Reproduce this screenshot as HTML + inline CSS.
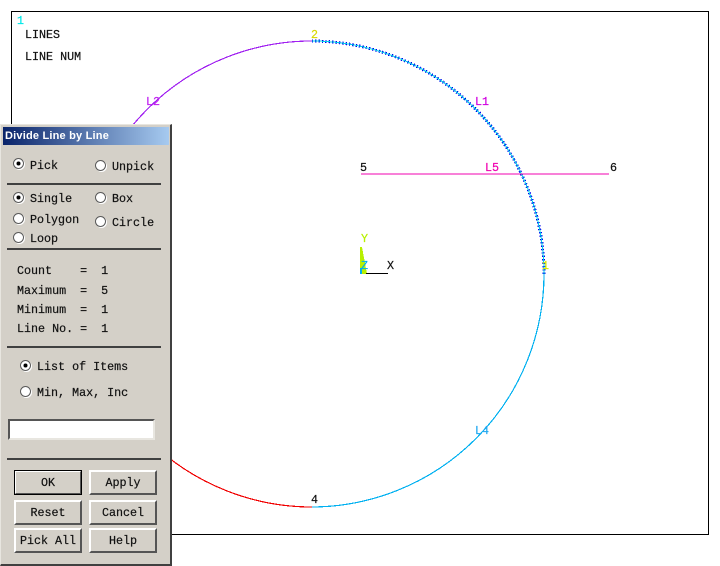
<!DOCTYPE html>
<html>
<head>
<meta charset="utf-8">
<style>
html,body{margin:0;padding:0;width:720px;height:566px;overflow:hidden;background:#fff}
.t{position:absolute;margin-top:1px;font-family:"Liberation Mono",monospace;font-size:11.7px;line-height:14px;color:#111;white-space:pre;-webkit-text-stroke:.2px currentColor}
#panel{position:absolute;left:0;top:124px;width:172px;height:442px;background:#d4d0c8;box-sizing:border-box;border-top:1px solid #e8e6e0;border-left:1px solid #e8e6e0;border-right:2px solid #404040;border-bottom:2px solid #404040}
#title{position:absolute;left:3px;top:127px;width:166px;height:18px;background:linear-gradient(90deg,#0a246a,#a6caf0);color:#fff;font:bold 11px/18px "Liberation Sans",sans-serif;letter-spacing:.2px;padding-left:2px;box-sizing:border-box;white-space:pre}
.sep{position:absolute;left:7px;width:154px;height:2px;background:#404040}
.r{position:absolute;width:11px;height:11px;box-sizing:border-box;border-radius:50%;background:#fff;border:1.5px solid #5a5a5a;box-shadow:1px 1px 0 #fff}
.r.on::after{content:"";position:absolute;left:2.5px;top:2.5px;width:3px;height:3px;border-radius:50%;background:#000;box-shadow:0 0 0 .5px #000}
.b{position:absolute;width:68px;height:25px;box-sizing:border-box;background:#d4d0c8;border:2px solid;border-color:#fff #555 #555 #fff;font-family:"Liberation Mono",monospace;font-size:11.7px;line-height:23px;text-align:center;color:#111;white-space:pre;-webkit-text-stroke:.2px currentColor}
.b.d{outline:1px solid #000;outline-offset:-1px}
#inp{position:absolute;left:8px;top:419px;width:147px;height:21px;box-sizing:border-box;background:#fff;border:2px solid;border-color:#555 #e8e6e0 #e8e6e0 #555}
</style>
</head>
<body>
<svg width="720" height="566" style="position:absolute;left:0;top:0" shape-rendering="crispEdges">
<rect x="11.5" y="11.5" width="697" height="523" fill="#fff" stroke="#000" stroke-width="1"/>
<path d="M312 41A233 233 0 0 0 79 274" fill="none" stroke="#a020f0" stroke-width="1.2"/>
<path d="M79 274A233 233 0 0 0 312 507" fill="none" stroke="#f00000" stroke-width="1.2"/>
<path d="M312 507A233 233 0 0 0 544 274" fill="none" stroke="#00b0f0" stroke-width="1.2"/>
<path d="M544 274A233 233 0 0 0 312 41" fill="none" stroke="#0000f0" stroke-width="3" stroke-dasharray="1.4 2"/>
<path d="M544 274A233 233 0 0 0 312 41" fill="none" stroke="#00d0e8" stroke-width="1"/>
<path d="M361 174H609" stroke="#f000b0" stroke-width="1.2" fill="none"/>
<polygon points="360,247 362,247 367,274 360,274" fill="#b8f000"/>
<rect x="360" y="268" width="2" height="6" fill="#00b0f0"/>
<rect x="366" y="273" width="22" height="1" fill="#000"/>
</svg>
<div class="t" style="left:17px;top:13px;color:#00e8e8">1</div>
<div class="t" style="left:25px;top:27px">LINES</div>
<div class="t" style="left:25px;top:49px">LINE NUM</div>
<div class="t" style="left:146px;top:94px;color:#c020f0">L2</div>
<div class="t" style="left:311px;top:27px;color:#d8d800">2</div>
<div class="t" style="left:475px;top:94px;color:#d000e0">L1</div>
<div class="t" style="left:360px;top:160px">5</div>
<div class="t" style="left:485px;top:160px;color:#f000b0">L5</div>
<div class="t" style="left:610px;top:160px">6</div>
<div class="t" style="left:542px;top:258px;color:#d8e800">1</div>
<div class="t" style="left:475px;top:423px;color:#20a8f0">L4</div>
<div class="t" style="left:311px;top:492px">4</div>
<div class="t" style="left:361px;top:231px;color:#b8f000">Y</div>
<div class="t" style="left:361px;top:258px;color:#00b0e8">Z</div>
<div class="t" style="left:387px;top:258px">X</div>

<div id="panel"></div>
<div id="title">Divide Line by Line</div>

<div class="r on" style="left:13px;top:158px"></div><div class="t" style="left:30px;top:158px">Pick</div>
<div class="r" style="left:95px;top:160px"></div><div class="t" style="left:112px;top:159px">Unpick</div>
<div class="sep" style="top:183px"></div>
<div class="r on" style="left:13px;top:192px"></div><div class="t" style="left:30px;top:191px">Single</div>
<div class="r" style="left:95px;top:192px"></div><div class="t" style="left:112px;top:191px">Box</div>
<div class="r" style="left:13px;top:213px"></div><div class="t" style="left:30px;top:212px">Polygon</div>
<div class="r" style="left:95px;top:216px"></div><div class="t" style="left:112px;top:215px">Circle</div>
<div class="r" style="left:13px;top:232px"></div><div class="t" style="left:30px;top:231px">Loop</div>
<div class="sep" style="top:248px"></div>

<div class="t" style="left:17px;top:263px">Count    =  1</div>
<div class="t" style="left:17px;top:283px">Maximum  =  5</div>
<div class="t" style="left:17px;top:302px">Minimum  =  1</div>
<div class="t" style="left:17px;top:321px">Line No. =  1</div>
<div class="sep" style="top:346px"></div>

<div class="r on" style="left:20px;top:360px"></div><div class="t" style="left:37px;top:359px">List of Items</div>
<div class="r" style="left:20px;top:386px"></div><div class="t" style="left:37px;top:385px">Min, Max, Inc</div>

<div id="inp"></div>
<div class="sep" style="top:458px"></div>

<div class="b d" style="left:14px;top:470px">OK</div>
<div class="b" style="left:89px;top:470px">Apply</div>
<div class="b" style="left:14px;top:500px">Reset</div>
<div class="b" style="left:89px;top:500px">Cancel</div>
<div class="b" style="left:14px;top:528px">Pick All</div>
<div class="b" style="left:89px;top:528px">Help</div>
</body>
</html>
